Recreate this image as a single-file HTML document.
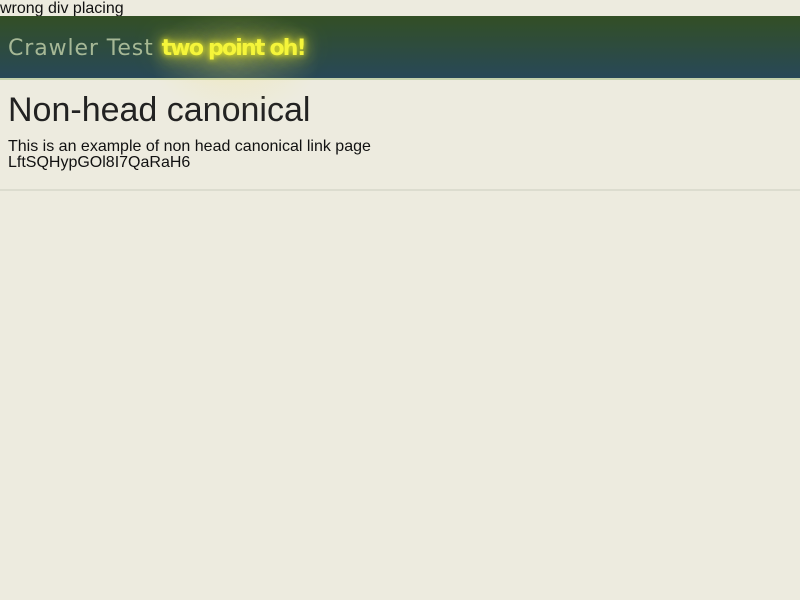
<!DOCTYPE html>
<html><head><style>
html,body{margin:0;padding:0;background:#edebdf;font-family:"Liberation Sans",Arial,sans-serif;color:#222;}
.top{font-size:16px;line-height:18px;height:16px;color:#111;}
.hdr{position:relative;height:62px;background:linear-gradient(#334f25,#284858);border-bottom:2px solid #c5d1ad;overflow:visible;}
.hdr .t{position:absolute;left:8px;top:20px;font-family:"Comic Sans MS","DejaVu Sans",sans-serif;font-size:22px;line-height:26px;color:#a6b896;white-space:nowrap;letter-spacing:0.9px}
.hdr .t b{color:#f5f53a;font-weight:bold;letter-spacing:-1.8px;text-shadow:0 0 6px #ee2,0 0 14px #dd3,0 0 26px #bb4;}
.glow{position:absolute;left:150px;top:-10px;width:170px;height:110px;border-radius:50%;background:radial-gradient(ellipse at center,rgba(240,230,120,0.25),rgba(240,230,120,0) 70%);pointer-events:none}
h1{margin:0;padding:11px 8px 0;font-size:34px;font-weight:normal;line-height:38px;color:#222}
p{margin:10px 8px 0;font-size:16px;line-height:16px;color:#111}
hr{margin:18px 0 0;border:0;height:2px;background:#dcdccf}
</style></head><body>
<div class="top">wrong div placing</div>
<div class="hdr"><div class="glow"></div><div class="t">Crawler Test <b>two point oh!</b></div></div>
<h1>Non-head canonical</h1>
<p>This is an example of non head canonical link page<br>LftSQHypGOl8I7QaRaH6</p>
<hr>
</body></html>
